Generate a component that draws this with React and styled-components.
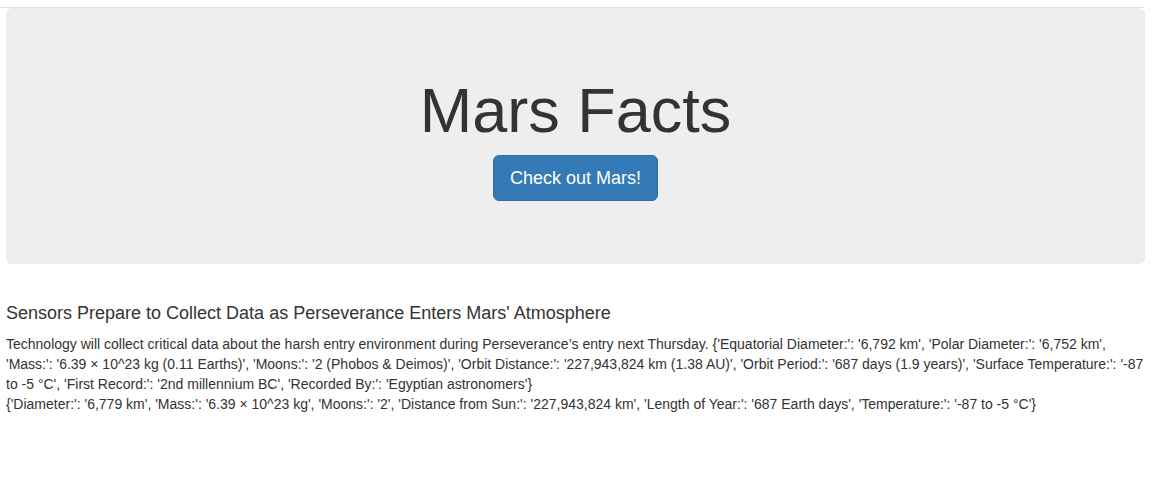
import React from 'react'
import styled, { createGlobalStyle } from 'styled-components'

const GlobalStyle = createGlobalStyle`
  body {
    margin: 0;
    background: #fff;
    font-family: "Liberation Sans", Arial, sans-serif;
    font-size: 14px;
    line-height: 1.428571;
    color: #333;
  }
`

const TopRule = styled.div`
  height: 7px;
  width: 1145px;
  border-bottom: 1px solid #e2e2e2;
`

const Page = styled.div`
  width: 1139px;
  margin-left: 6px;
`

const Jumbotron = styled.div`
  background-color: #eee;
  border-radius: 6px;
  padding: 48px 60px;
  margin-bottom: 40px;
  text-align: center;

  h1 {
    margin: 20px 0 10px;
    font-size: 63px;
    font-weight: 500;
    line-height: 1.1;
    color: #333;
  }
`

const ButtonRow = styled.div`
  margin-bottom: 15px;
  font-size: 0;
`

const Button = styled.a`
  display: inline-block;
  padding: 10px 16px;
  font-size: 18px;
  line-height: 1.3333333;
  color: #fff;
  background-color: #337ab7;
  border: 1px solid #2e6da4;
  border-radius: 6px;
  text-decoration: none;
  cursor: pointer;
`

const Headline = styled.h4`
  margin: 0 0 10px;
  font-size: 18px;
  font-weight: 500;
  line-height: 1.1;
`

const Body = styled.p`
  margin: 0;
  font-size: 14px;
  line-height: 20px;
`

const App = () => {
  const facts = "{'Equatorial Diameter:': '6,792 km', 'Polar Diameter:': '6,752 km', 'Mass:': '6.39 × 10^23 kg (0.11 Earths)', 'Moons:': '2 (Phobos & Deimos)', 'Orbit Distance:': '227,943,824 km (1.38 AU)', 'Orbit Period:': '687 days (1.9 years)', 'Surface Temperature:': '-87 to -5 °C', 'First Record:': '2nd millennium BC', 'Recorded By:': 'Egyptian astronomers'}"
  const summary = "{'Diameter:': '6,779 km', 'Mass:': '6.39 × 10^23 kg', 'Moons:': '2', 'Distance from Sun:': '227,943,824 km', 'Length of Year:': '687 Earth days', 'Temperature:': '-87 to -5 °C'}"

  return (
    <>
      <GlobalStyle />
      <TopRule />
      <Page>
        <Jumbotron>
          <h1>Mars Facts</h1>
          <ButtonRow>
            <Button href="#">Check out Mars!</Button>
          </ButtonRow>
        </Jumbotron>
        <Headline>Sensors Prepare to Collect Data as Perseverance Enters Mars' Atmosphere</Headline>
        <Body>
          Technology will collect critical data about the harsh entry environment during Perseverance’s entry next Thursday. {facts}
        </Body>
        <Body>{summary}</Body>
      </Page>
    </>
  )
}

export default App
